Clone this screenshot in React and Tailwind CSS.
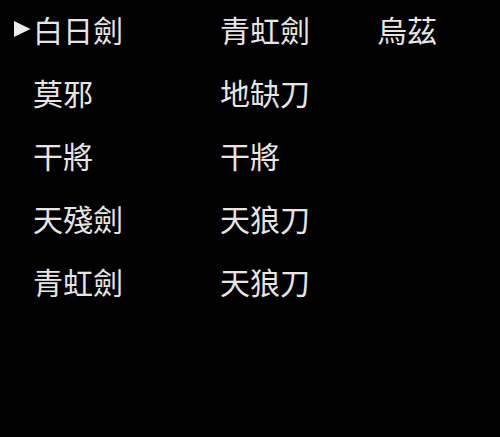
const ROWS = [
  ['白日劍', '青虹劍', '烏茲'],
  ['莫邪', '地缺刀', ''],
  ['干將', '干將', ''],
  ['天殘劍', '天狼刀', ''],
  ['青虹劍', '天狼刀', ''],
];

function Cursor() {
  return (
    <svg width="17" height="16" viewBox="0 0 17 16" className="ml-[14px]">
      <path d="M0 0 L16.5 8 L0 16 Z" fill="#ececec" />
    </svg>
  );
}

export default function App() {
  return (
    <div
      className="w-[500px] h-[437px] bg-black text-[#e6e6e6] overflow-hidden"
      style={{ fontFamily: '"Noto Sans CJK TC", "Noto Sans CJK JP", sans-serif' }}
    >
      <div className="grid grid-cols-[33px_187px_157px_1fr] gap-y-[5px] text-[30px] leading-[58px]">
        {ROWS.map((row, i) => (
          <div key={i} className="contents">
            <div className="flex items-center">{i === 0 && <Cursor />}</div>
            {row.map((name, j) => (
              <div key={j} className="whitespace-nowrap">
                {name}
              </div>
            ))}
          </div>
        ))}
      </div>
    </div>
  );
}
